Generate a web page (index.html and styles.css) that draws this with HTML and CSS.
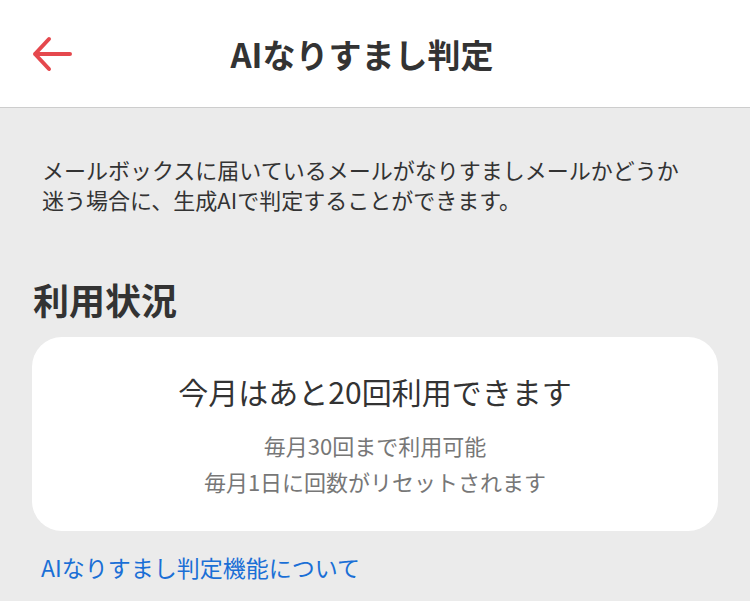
FILE: index.html
```html
<!DOCTYPE html>
<html lang="ja">
<head>
    <meta charset="UTF-8">
    <meta name="viewport" content="width=device-width, initial-scale=1.0">
    <title>AIなりすまし判定</title>
    <link rel="stylesheet" href="styles.css">
</head>
<body>
    <header class="app-bar">
        <button class="back-btn" aria-label="戻る">
            <svg width="40" height="36" viewBox="0 0 40 36">
                <path d="M3 18 H38 M17 3 L3 18 L17 33" fill="none" stroke="#e5484d" stroke-width="4" stroke-linecap="round" stroke-linejoin="round"/>
            </svg>
        </button>
        <h1 class="app-title">AIなりすまし判定</h1>
        <span></span>
    </header>

    <main class="content">
        <p class="intro">メールボックスに届いているメールがなりすましメールかどうか<br>迷う場合に、生成AIで判定することができます。</p>

        <h2 class="section-title">利用状況</h2>
        <div class="usage-card">
            <div class="usage-main">今月はあと20回利用できます</div>
            <div class="usage-note">毎月30回まで利用可能</div>
            <div class="usage-note">毎月1日に回数がリセットされます</div>
        </div>

        <a class="about-link" href="#">AIなりすまし判定機能について</a>
    </main>
</body>
</html>
```

FILE: styles.css
```css
:root {
    --accent-color: #e5484d;
    --text-color: #333;
    --sub-text-color: #777;
    --link-color: #1a6fd6;
    --background-color: #ebebeb;
}

* {
    box-sizing: border-box;
    margin: 0;
    padding: 0;
}

body {
    font-family: "Noto Sans CJK JP", "Noto Sans", sans-serif;
    background-color: var(--background-color);
    color: var(--text-color);
    min-height: 100vh;
}

/* ヘッダー */
.app-bar {
    display: grid;
    grid-template-columns: 100px 1fr 100px;
    align-items: center;
    height: 108px;
    background-color: #fff;
    border-bottom: 1px solid #cdcdcd;
}

.back-btn {
    display: flex;
    align-items: center;
    background: none;
    border: none;
    padding-left: 32px;
    cursor: pointer;
}

.app-title {
    text-align: center;
    font-size: 33px;
    font-weight: 700;
    line-height: 40px;
    padding-right: 26px;
}

/* 本文 */
.content {
    padding: 46px 32px 0;
}

.intro {
    font-size: 22px;
    line-height: 30px;
    padding: 0 10px;
}

.section-title {
    margin-top: 65px;
    font-size: 36px;
    font-weight: 700;
    line-height: 40px;
    padding-left: 1px;
}

.usage-card {
    margin-top: 18px;
    background-color: #fff;
    border-radius: 30px;
    padding: 37px 20px 32px;
    text-align: center;
}

.usage-main {
    font-size: 30px;
    line-height: 34px;
    margin-bottom: 19px;
}

.usage-note {
    font-size: 22px;
    line-height: 36px;
    color: var(--sub-text-color);
}

.about-link {
    display: inline-block;
    margin-top: 20px;
    padding-left: 9px;
    font-size: 23px;
    line-height: 32px;
    color: var(--link-color);
    text-decoration: none;
}
```
